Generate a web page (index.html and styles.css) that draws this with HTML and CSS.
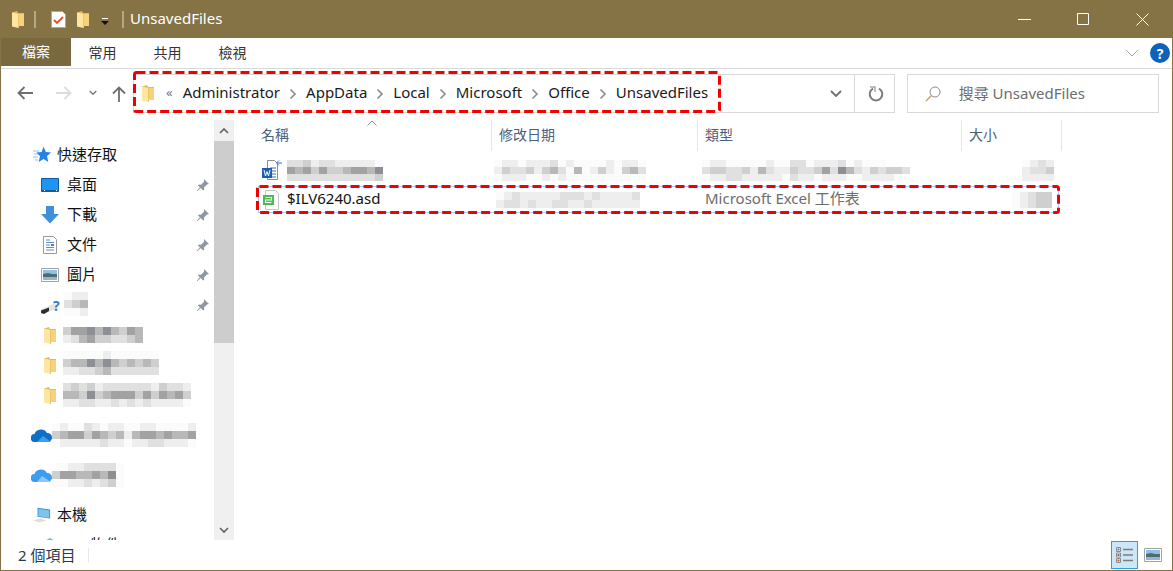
FILE: index.html
```html
<!DOCTYPE html>
<html lang="zh-Hant">
<head>
<meta charset="utf-8">
<title>UnsavedFiles</title>
<link rel="stylesheet" href="styles.css">
</head>
<body>
<svg class="defs" width="0" height="0" aria-hidden="true">
  <symbol id="folder" viewBox="0 0 12 17">
    <path d="M0 1.500L5 0l1 2h6v13H0z" fill="#e9b957"/>
    <path d="M0 1.500L6.500 3v14L0 15.500z" fill="#fde6a2"/>
    <path d="M6.500 3H12v12H6.500z" fill="#f6d27a"/>
    <path d="M6 3h1v14H6z" fill="#eec56a"/>
  </symbol>
  <symbol id="pin" viewBox="0 0 14 14">
    <path d="M8 1l5 5-2 .5-3 3 .2 2.300-1 .7L2 7.500l.7-1 2.300.2 3-3z" fill="#8f97a0"/>
    <path d="M4 9.500L1 13l3.500-3z" fill="#8f97a0" stroke="#8f97a0" stroke-width=".6"/>
  </symbol>
  <symbol id="crumb" viewBox="0 0 8 12">
    <path d="M1.500 1.500L6 6l-4.500 4.500" fill="none" stroke="#8a8a8a" stroke-width="1.600"/>
  </symbol>
</svg>
<div class="window">
  <header class="titlebar">
    <svg class="t-folder"><use href="#folder"/></svg>
    <span class="t-sep"></span>
    <svg class="t-check" viewBox="0 0 15 17">
      <path d="M.5.500h11l3 3v13H.5z" fill="#fff" stroke="#a9a9a9"/>
      <path d="M3 9l3 3 6-6" fill="none" stroke="#e2502a" stroke-width="1.800"/>
    </svg>
    <svg class="t-folder t-folder2"><use href="#folder"/></svg>
    <svg class="t-drop" viewBox="0 0 8 7">
      <path d="M1 0h6v1H1z" fill="#fff"/>
      <path d="M0 3h8L4 7z" fill="#111"/>
    </svg>
    <span class="t-sep t-sep2"></span>
    <span class="t-name">UnsavedFiles</span>
    <div class="win-buttons">
      <svg viewBox="0 0 13 13" class="wb"><path d="M0 6.500h13" stroke="#fff" fill="none"/></svg>
      <svg viewBox="0 0 13 13" class="wb"><path d="M.5.500h11v11H.5z" stroke="#fff" fill="none"/></svg>
      <svg viewBox="0 0 13 13" class="wb"><path d="M.5.500l12 12M12.500.500l-12 12" stroke="#fff" fill="none"/></svg>
    </div>
  </header>

  <nav class="ribbon">
    <span class="tab tab-file">檔案</span>
    <span class="tab">常用</span>
    <span class="tab">共用</span>
    <span class="tab">檢視</span>
    <svg class="rib-chev" viewBox="0 0 14 8"><path d="M1 1l6 6 6-6" fill="none" stroke="#a8a8a8"/></svg>
    <span class="help">?</span>
  </nav>

  <div class="addressbar">
    <svg class="nv nv-back" viewBox="0 0 16 14"><path d="M16 7H1.500M7.500 1l-6 6 6 6" fill="none" stroke="#6f6f6f" stroke-width="1.800"/></svg>
    <svg class="nv nv-fwd" viewBox="0 0 16 14"><path d="M0 7h14.500M8.500 1l6 6-6 6" fill="none" stroke="#dcdcdc" stroke-width="1.800"/></svg>
    <svg class="nv-down" viewBox="0 0 8 6"><path d="M.7 1L4 4.300 7.300 1" fill="none" stroke="#7b7b7b" stroke-width="1.500"/></svg>
    <svg class="nv-up" viewBox="0 0 14 16"><path d="M7 16V1.800M1 7.500l6-6 6 6" fill="none" stroke="#6f6f6f" stroke-width="1.800"/></svg>
    <div class="addr">
      <svg class="addr-folder"><use href="#folder"/></svg>
      <span class="addr-more">«</span>
      <span>Administrator</span><svg class="crumb"><use href="#crumb"/></svg>
      <span>AppData</span><svg class="crumb"><use href="#crumb"/></svg>
      <span>Local</span><svg class="crumb"><use href="#crumb"/></svg>
      <span>Microsoft</span><svg class="crumb"><use href="#crumb"/></svg>
      <span>Office</span><svg class="crumb"><use href="#crumb"/></svg>
      <span>UnsavedFiles</span>
      <div class="addr-tools">
        <span class="addr-drop"><svg viewBox="0 0 12 7"><path d="M1 1l5 5 5-5" fill="none" stroke="#6f6f6f" stroke-width="1.800"/></svg></span>
        <span class="addr-refresh"><svg viewBox="0 0 16 16"><path d="M5 2.600a6.300 6.300 0 1 0 6 0" fill="none" stroke="#7d7d7d" stroke-width="2"/><path d="M2 .5h5.500v5.500h-1V1.500H2z" fill="#7d7d7d"/></svg></span>
      </div>
    </div>
    <div class="search">
      <svg viewBox="0 0 16 16"><circle cx="10" cy="6" r="5" fill="none" stroke="#8a8a8a"/><path d="M6.500 9.500L1 15" stroke="#c79a62" stroke-width="1.300"/></svg>
      <span>搜尋 UnsavedFiles</span>
    </div>
  </div>

  <div class="body">
    <aside class="navpane">
      <div class="navlist">
        <div class="nitem root">
          <svg class="nicon" viewBox="0 0 18 18"><path d="M10.500.5l2.300 5.500 5.200.4-4 3.700 1.300 5.900-4.800-3-4.800 3 1.300-5.900-3.800-3.700 5.500-.4z" fill="#2483e2"/><path d="M0 5h6M1 8h4M0 11h5M2 14h3" stroke="#8cc2f2"/></svg>
          <span>快速存取</span>
        </div>
        <div class="nitem sub">
          <svg class="nicon" viewBox="0 0 18 14"><path d="M.5.500h17v13H.5z" fill="#1e94f5" stroke="#0f5c9e"/><path d="M1 12h16v1H1z" fill="#0f5c9e"/><path d="M3 12h1v1H3zM15 12h1v1h-1z" fill="#fff"/></svg>
          <span>桌面</span><svg class="pin"><use href="#pin"/></svg>
        </div>
        <div class="nitem sub">
          <svg class="nicon" viewBox="0 0 18 18"><path d="M5 0h8v8h5l-9 9.500L0 8h5z" fill="#3f8fdd"/></svg>
          <span>下載</span><svg class="pin"><use href="#pin"/></svg>
        </div>
        <div class="nitem sub">
          <svg class="nicon" viewBox="0 0 18 18"><path d="M2.500.500h10l3 3v14h-13z" fill="#fff" stroke="#9a9a9a"/><path d="M5 4h4M5 6.500h8M5 9h4M5 11.500h8M5 14h8" stroke="#5f8fc0"/><path d="M10 8h3v2h-3z" fill="#4e7fae"/></svg>
          <span>文件</span><svg class="pin"><use href="#pin"/></svg>
        </div>
        <div class="nitem sub">
          <svg class="nicon" viewBox="0 0 18 14"><path d="M.5.500h17v13H.5z" fill="#fff" stroke="#a3a3a3"/><path d="M2 2h14v4H2z" fill="#8ec0e8"/><path d="M2 6l5-1 4 1 5 0v3H2z" fill="#4f6d6c"/><path d="M2 9h14v3H2z" fill="#9ab4cd"/></svg>
          <span>圖片</span><svg class="pin"><use href="#pin"/></svg>
        </div>
        <div class="nitem sub drive">
          <svg class="nicon nicon-drive" viewBox="0 0 18 10"><path d="M0 5.500L12 0l5 1v3L3 10 0 9z" fill="#e4e4e4"/><path d="M0 6.500l8-3v3.500L3 10 0 9z" fill="#2e2e2e"/></svg>
          <span class="qmark">?</span>
          <span class="mosaic cell8 m-drive" data-m="011|234|001"></span>
          <svg class="pin"><use href="#pin"/></svg>
        </div>
        <div class="nitem sub">
          <svg class="nicon nfolder"><use href="#folder"/></svg>
          <span class="mosaic cell8" data-m="3556464354|1245332234"></span>
        </div>
        <div class="nitem sub">
          <svg class="nicon nfolder"><use href="#folder"/></svg>
          <span class="mosaic cell8 m-up" data-m="000001000000|344646434343|112234222222"></span>
        </div>
        <div class="nitem sub">
          <svg class="nicon nfolder"><use href="#folder"/></svg>
          <span class="mosaic cell8" data-m="2323122222213221|4436345553535453|1122112121211110"></span>
        </div>
        <div class="nitem root gap">
          <svg class="nicon nicon-cloud" viewBox="0 0 21 14"><path d="M4 14a4 4 0 0 1-.5-8A7 7 0 0 1 16 5a4.500 4.500 0 0 1 1 9z" fill="#0f6fc6"/><path d="M6 14l6-6 8 6z" fill="#3aa0ea"/></svg>
          <span class="mosaic cell8" data-m="010021011001100001|345535434145545445|011111211011221110"></span>
        </div>
        <div class="nitem root gap">
          <svg class="nicon nicon-cloud" viewBox="0 0 21 14"><path d="M4 14a4 4 0 0 1-.5-8A7 7 0 0 1 16 5a4.500 4.500 0 0 1 1 9z" fill="#3b9cf0"/><path d="M6 14l5-6 9 6z" fill="#8ac7f7"/></svg>
          <span class="mosaic cell8" data-m="001122220|355445460|001121230"></span>
        </div>
        <div class="nitem root gap">
          <svg class="nicon" viewBox="0 0 20 18"><path d="M5 1l14 2v10L5 11z" fill="#3e94d6"/><path d="M6 2l12 2v8L6 10.500z" fill="#7cc3ee"/><path d="M0 15l8-2 7 2-8 2z" fill="#dcdcdc"/></svg>
          <span>本機</span>
        </div>
        <div class="nitem sub">
          <svg class="nicon" viewBox="0 0 18 14"><path d="M9 0l9 5-9 5-9-5z" fill="#5cc4e4"/><path d="M0 5l9 5v4L0 9z" fill="#9adcef"/></svg>
          <span>3D 物件</span>
        </div>
      </div>
      <div class="scrollbar">
        <span class="sb-btn"><svg viewBox="0 0 10 6"><path d="M1 5l4-4 4 4" fill="none" stroke="#5f5f5f" stroke-width="1.600"/></svg></span>
        <span class="sb-thumb"></span>
        <span class="sb-track"></span>
        <span class="sb-btn"><svg viewBox="0 0 10 6"><path d="M1 1l4 4 4-4" fill="none" stroke="#5f5f5f" stroke-width="1.600"/></svg></span>
      </div>
    </aside>

    <main class="files">
      <div class="grid header">
        <span class="hcell hname">名稱<svg class="sort" viewBox="0 0 10 6"><path d="M.5 5.500L5 1l4.500 4.500" fill="none" stroke="#8e8e8e"/></svg></span>
        <span class="hcell">修改日期</span>
        <span class="hcell">類型</span>
        <span class="hcell">大小</span>
      </div>
      <div class="grid row row1">
        <span class="fname">
          <svg class="ficon" viewBox="0 0 20 22"><path d="M5.500 1.500h7l3 3v16h-10z" fill="#fff" stroke="#8d8d8d"/><path d="M8 9h6M8 12h6M8 15h6M8 18h6" stroke="#3a6eb5"/><path d="M0 9h10v10H0z" fill="#1d5db0"/><path d="M2 11l1.500 6L5 12.500 6.500 17 8 11" fill="none" stroke="#fff"/><path d="M20 4h-5M17 1.500L14.500 4 17 6.500" fill="none" stroke="#2f7ad0"/></svg>
          <span class="mosaic cellf" data-m="223122111110|545353345546|222222222223"></span>
        </span>
        <span class="mosaic cellf m-date1" data-m="0110111201000010110|1322313420401310342|0111001010000000000"></span>
        <span class="mosaic cellf m-type1" data-m="01100000100220111201000|23322314211322352642132332|0112211111021101110011110"></span>
        <span class="mosaic cellf m-size1" data-m="0121|1223|1111"></span>
      </div>
      <div class="grid row row2">
        <span class="fname">
          <svg class="ficon" viewBox="0 0 20 22"><path d="M3.500 1.500h10l3 3v16h-13z" fill="#fff" stroke="#c5c5c5"/><path d="M1 6h11v10H1z" fill="#4dbb55"/><path d="M3.500 8.500h6v2.500h-6v2.500h6" fill="none" stroke="#fff" stroke-width="1.100"/></svg>
          <span class="fn">$ILV6240.asd</span>
        </span>
        <span class="mosaic cellg m-date2" data-m="012111112221211112|122121122112111111"></span>
        <span class="ftype">Microsoft Excel 工作表</span>
        <span class="mosaic cellg m-size2" data-m="01233|01233"></span>
      </div>
    </main>
  </div>

  <footer class="status">
    <span class="count">2 個項目</span>
    <span class="st-sep"></span>
    <span class="view active">
      <svg viewBox="0 0 18 16"><path d="M.5.500h4v4h-4zM.5 6h4v4h-4zM.5 11.500h4v4h-4z" fill="#fff" stroke="#8a8a8a"/><path d="M1.500 1.500h2v2h-2z" fill="#3d7cc0"/><path d="M1.500 7h2v2h-2zM1.500 12.500h2v2h-2z" fill="#b05a2e"/><path d="M7 2.500h10M7 8h10M7 13.500h10" stroke="#7c7c7c" stroke-width="1.300"/></svg>
    </span>
    <span class="view">
      <svg viewBox="0 0 18 14"><path d="M.5.500h17v13H.5z" fill="#fff" stroke="#a3a3a3"/><path d="M2 2h14v4H2z" fill="#8ec0e8"/><path d="M2 6l5-1 4 1 5 0v3H2z" fill="#4f6d6c"/><path d="M2 9h14v3H2z" fill="#9ab4cd"/></svg>
    </span>
  </footer>

  <svg class="marks" width="1173" height="571" aria-hidden="true">
    <rect class="mark" x="134.500" y="72.500" width="585" height="39" rx="2"/>
    <rect class="mark" x="257.500" y="186.500" width="801" height="26" rx="2"/>
  </svg>
</div>
<script src="mosaic.js"></script>
</body>
</html>
```
FILE: styles.css
```css
* { box-sizing: border-box; }
html, body { margin: 0; height: 100%; overflow: hidden; background: #fff; }
body {
  font-family: "Noto Sans", "Noto Sans CJK TC", sans-serif;
  font-size: 15px;
  color: #1a1a1a;
}
.defs { position: absolute; }
svg { display: block; flex: none; }

.window {
  position: relative;
  width: 1173px;
  height: 571px;
  display: flex;
  flex-direction: column;
  border: 1px solid #857345;
  border-top: 0;
  background: #fff;
  overflow: hidden;
}
.marks { position: absolute; left: -1px; top: 0; pointer-events: none; }
.mark { fill: none; stroke: #f00000; stroke-width: 3; stroke-dasharray: 9 4; }

/* title bar */
.titlebar {
  flex: none;
  height: 38px;
  display: flex;
  align-items: center;
  background: #857345;
  color: #fff;
  padding-left: 11px;
}
.t-folder { width: 12px; height: 17px; }
.t-sep { width: 2px; height: 17px; background: #b3a98a; margin-left: 10px; }
.t-check { width: 15px; height: 17px; margin-left: 15px; }
.t-folder2 { margin-left: 11px; }
.t-drop { width: 8px; height: 7px; margin-left: 12px; margin-top: 4px; }
.t-sep2 { margin-left: 13px; }
.t-name { font-size: 15px; margin: 0 0 2px 6px; }
.win-buttons { margin-left: auto; display: flex; gap: 46px; padding-right: 23px; }
.wb { width: 13px; height: 13px; }

/* ribbon */
.ribbon {
  flex: none;
  height: 31px;
  display: flex;
  align-items: flex-start;
  border-bottom: 1px solid #dadada;
  font-size: 14px;
  color: #333;
}
.tab { width: 65px; height: 29px; padding-bottom: 2px; display: flex; align-items: center; justify-content: center; }
.ribbon .tab:nth-child(2) { margin-left: -1px; }
.tab-file { width: 70px; height: 28px; background: #7a693f; color: #fff; }
.rib-chev { width: 14px; height: 8px; margin: 11px 0 0 auto; }
.help {
  width: 20px; height: 20px; margin: 5px 2px 0 11px; border-radius: 50%;
  background: #0e63b8; color: #fff; font-weight: 700; font-size: 14px;
  display: flex; align-items: center; justify-content: center;
}

/* address bar */
.addressbar {
  flex: none;
  height: 51px;
  display: flex;
  align-items: flex-start;
  padding: 5px 13px 0 0;
  position: relative;
}
.nv { width: 16px; height: 14px; margin-top: 12px; }
.nv-back { margin-left: 16px; }
.nv-fwd { margin-left: 23px; }
.nv-down { width: 8px; height: 6px; margin: 16px 0 0 17px; }
.nv-up { width: 14px; height: 16px; margin: 12px 0 0 15px; }
.addr {
  margin-left: 7px;
  width: 764px;
  height: 39px;
  border: 1px solid #d9d9d9;
  display: flex;
  align-items: center;
  padding-left: 8px;
  color: #1a1a1a;
}
.addr > span { margin-bottom: 4px; }
.addr-folder { width: 12px; height: 17px; }
.addr .addr-more { color: #777; margin: 0 10px 4px 12px; font-size: 13px; }
.crumb { width: 8px; height: 12px; margin: 0 9px; }
.addr-tools { margin-left: auto; display: flex; height: 100%; }
.addr-drop { width: 39px; padding-left: 3px; display: flex; align-items: center; justify-content: center; border-right: 1px solid #d9d9d9; }
.addr-drop svg { width: 12px; height: 7px; }
.addr-refresh { width: 39px; padding-left: 3px; display: flex; align-items: center; justify-content: center; }
.addr-refresh svg { width: 16px; height: 16px; }
.search {
  margin-left: 12px;
  width: 253px;
  height: 39px;
  border: 1px solid #d9d9d9;
  display: flex;
  align-items: center;
  gap: 18px;
  padding-left: 17px;
  color: #6d6d6d;
}
.search span { margin-bottom: 3px; }
.search svg { width: 16px; height: 16px; }

/* body */
.body { flex: 1; min-height: 0; display: flex; }
.navpane { flex: none; width: 233px; display: flex; overflow: hidden; }
.navlist { width: 213px; padding-top: 20px; overflow: hidden; }
.nitem { height: 30px; display: flex; align-items: center; position: relative; color: #111; }
.nitem > span { margin-bottom: 4px; }
.root { padding-left: 32px; }
.root .nicon { width: 18px; height: 18px; margin-right: 6px; }
.sub { padding-left: 40px; }
.sub .nicon { width: 18px; height: 18px; margin-right: 8px; }
.gap { margin-top: 10px; }
.sub .nfolder { width: 12px; height: 17px; margin: 0 7px 0 3px; }
.root .nicon-cloud { width: 21px; height: 14px; margin: 0 0 0 -2px; }
.sub .nicon-drive { width: 18px; height: 10px; margin: 8px 0 0 0; }
.nitem .qmark { color: #2f7fd0; font-size: 14px; font-weight: 700; width: 8px; margin: 0 3px 0 -6px; }
.nitem > .mosaic { margin: 0; }
.nitem > .m-drive { margin-bottom: 2px; }
.nitem > .m-up { margin-bottom: 4px; }
.pin { width: 14px; height: 14px; position: absolute; left: 195px; }
.scrollbar { width: 20px; display: flex; flex-direction: column; background: #f0f0f0; }
.sb-btn { height: 21px; flex: none; display: flex; align-items: center; justify-content: center; }
.sb-btn svg { width: 10px; height: 6px; }
.sb-thumb { height: 202px; flex: none; background: #cdcdcd; }
.sb-track { flex: 1; }

/* files */
.files { flex: 1; min-width: 0; }
.grid {
  display: grid;
  grid-template-columns: 258px 206px 264px 100px;
  align-items: center;
}
.header { height: 31px; margin-bottom: 5px; color: #4c607a; font-size: 14px; }
.hcell { height: 31px; display: flex; align-items: center; padding: 0 0 4px 7px; border-right: 1px solid #e5e5e5; }
.hname { padding-left: 27px; position: relative; }
.sort { position: absolute; left: 133px; top: 0; width: 10px; height: 6px; }
.row { height: 28px; }
.row1 { margin-bottom: 2px; }
.row2 {
  width: 801px; height: 27px; margin-left: 24px;
  grid-template-columns: 233px 206px 264px 96px;
  border: 1px solid #99d1ff;
}
.fname { display: flex; align-items: center; padding-left: 28px; gap: 5px; }
.row2 .fname { padding-left: 3px; }
.ficon { width: 20px; height: 22px; }
.fn { color: #111; margin-bottom: 4px; }
.ftype { color: #6d6d6d; padding-left: 7px; margin-bottom: 4px; }

.mosaic { display: grid; grid-auto-rows: 8px; width: max-content; }
.mosaic i { display: block; }
.mosaic .mrow { display: flex; }
.cell8 i { width: 8px; height: 8px; }
.cellf i { width: 8px; height: 7px; }
.cellg i { width: 8px; height: 8px; }
.cellf { grid-auto-rows: 7px; }
.m-date1 { margin-left: 2px; }
.m-type1 { margin-left: 4px; }
.m-size1 { justify-self: end; margin-right: 8px; }
.m-date2 { margin-left: 4px; }
.m-size2 { justify-self: end; margin-right: 6px; }
.v0 { background: #fbfbfb; }
.v1 { background: #eeeeee; }
.v2 { background: #e0e0e0; }
.v3 { background: #cfcfcf; }
.v4 { background: #b8b8b8; }
.v5 { background: #a2a2a2; }
.v6 { background: #8c8f94; }

/* status */
.status {
  flex: none;
  height: 30px;
  display: flex;
  align-items: center;
  padding-left: 17px;
  font-size: 15px;
  color: #28384e;
}
.count { width: 70px; margin-bottom: 2px; }
.st-sep { width: 1px; height: 14px; background: #e8e8e8; }
.view { width: 27px; height: 28px; display: flex; align-items: center; justify-content: center; }
.view svg { width: 18px; height: 16px; }
.view.active { margin-left: auto; background: #cce8f8; border: 1px solid #2f9fdc; }
.view:last-child { margin: 0 6px 0 1px; }
.view:last-child svg { height: 14px; }
```
FILE: mosaic.js
```js
document.querySelectorAll('.mosaic').forEach(function (box) {
  box.dataset.m.split('|').forEach(function (line) {
    var row = document.createElement('span');
    row.className = 'mrow';
    line.split('').forEach(function (v) {
      var cell = document.createElement('i');
      cell.className = 'v' + v;
      row.appendChild(cell);
    });
    box.appendChild(row);
  });
});
```
